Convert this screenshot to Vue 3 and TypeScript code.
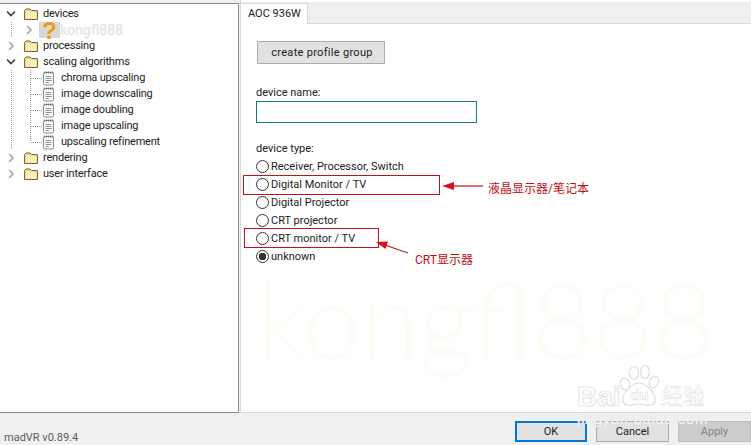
<script setup lang="ts">
type Kind = 'folder' | 'doc' | 'unknown'
interface Row {
  label: string
  kind: Kind
  level: 0 | 1
  ctl: 'open' | 'closed' | 'branch' | 'last'
}
const rows: Row[] = [
  { label: 'devices', kind: 'folder', level: 0, ctl: 'open' },
  { label: 'kongfl888', kind: 'unknown', level: 1, ctl: 'closed' },
  { label: 'processing', kind: 'folder', level: 0, ctl: 'closed' },
  { label: 'scaling algorithms', kind: 'folder', level: 0, ctl: 'open' },
  { label: 'chroma upscaling', kind: 'doc', level: 1, ctl: 'branch' },
  { label: 'image downscaling', kind: 'doc', level: 1, ctl: 'branch' },
  { label: 'image doubling', kind: 'doc', level: 1, ctl: 'branch' },
  { label: 'image upscaling', kind: 'doc', level: 1, ctl: 'branch' },
  { label: 'upscaling refinement', kind: 'doc', level: 1, ctl: 'last' },
  { label: 'rendering', kind: 'folder', level: 0, ctl: 'closed' },
  { label: 'user interface', kind: 'folder', level: 0, ctl: 'closed' },
]
const types = [
  { label: 'Receiver, Processor, Switch', on: false },
  { label: 'Digital Monitor / TV', on: false },
  { label: 'Digital Projector', on: false },
  { label: 'CRT projector', on: false },
  { label: 'CRT monitor / TV', on: false },
  { label: 'unknown', on: true },
]
</script>

<template>
  <div class="window">
    <div class="main">
      <div class="tree">
        <div v-for="r in rows" :key="r.label" class="row">
          <span v-if="r.level === 1" class="indent"></span>
          <span class="ctl" :class="r.ctl">
            <svg v-if="r.ctl === 'open'" width="12" height="8" viewBox="0 0 12 8">
              <path d="M2 1.5 6 5.5 10 1.5" fill="none" stroke="#3c3c3c" stroke-width="1.6" />
            </svg>
            <svg v-else-if="r.ctl === 'closed'" width="8" height="12" viewBox="0 0 8 12">
              <path d="M2 2 6 6 2 10" fill="none" stroke="#a6a6a6" stroke-width="1.6" />
            </svg>
          </span>
          <svg v-if="r.kind === 'folder'" class="ico" width="14" height="14" viewBox="0 0 14 14">
            <path d="M.5 12.5V3.5L2 2H6L7.5 3.5H13.5V12.5Z" fill="#f6dc85" stroke="#6f6a50" />
            <path d="M2 5H12V11.5H2Z" fill="#fdeeb4" />
          </svg>
          <svg v-else-if="r.kind === 'doc'" class="ico doc" width="13" height="15" viewBox="0 0 13 15">
            <rect x="1.5" y="1.5" width="10" height="12.5" rx="1.5" fill="#fff" stroke="#7f8a90" />
            <path d="M2 1.5H11" stroke="#77705c" stroke-width="2" stroke-dasharray="1 1" />
            <path d="M3.5 5.5H9.5M3.5 7.5H9.5M3.5 9.5H9.5M3.5 11.5H7" stroke="#8a949a" />
          </svg>
          <span v-else class="unk">?</span>
          <span class="label" :class="{ ghost: r.kind === 'unknown' }">{{ r.label }}</span>
        </div>
      </div>
      <div class="pane">
        <div class="tabs"><span class="tab">AOC 936W</span></div>
        <div class="page">
          <button class="create" type="button">create profile group</button>
          <div class="field-label name">device name:</div>
          <div class="input"></div>
          <div class="field-label kind">device type:</div>
          <div v-for="t in types" :key="t.label" class="radio-row">
            <span class="radio" :class="{ on: t.on }"></span>
            <span class="radio-text">{{ t.label }}</span>
          </div>
        </div>
      </div>
    </div>
    <div class="footer">
      <span class="version">madVR v0.89.4</span>
      <div class="actions">
        <button class="btn ok" type="button">OK</button>
        <button class="btn" type="button">Cancel</button>
        <button class="btn off" type="button">Apply</button>
      </div>
    </div>

    <div class="mark">kongfl888</div>

    <div class="redbox box1"></div>
    <div class="redbox box2"></div>
    <svg class="arrows" width="751" height="445" viewBox="0 0 751 445">
      <path d="M483 186H452" stroke="#c8101a" stroke-width="1.2" />
      <path d="M442 186 454 182V190Z" fill="#d8101a" />
      <path d="M408 253 385 245" stroke="#c8101a" stroke-width="1.2" />
      <path d="M376 242 388 241.5 385.5 249Z" fill="#d8101a" />
    </svg>
    <div class="note note1">液晶显示器/笔记本</div>
    <div class="note note2">CRT显示器</div>

    <svg class="paw" width="44" height="46" viewBox="0 0 44 46">
      <g fill="#fff" stroke="#dedede" stroke-width="1.2">
        <ellipse cx="7" cy="20" rx="4.5" ry="6" transform="rotate(-20 7 20)" />
        <ellipse cx="16" cy="9" rx="4.5" ry="6.5" />
        <ellipse cx="27" cy="8" rx="4.5" ry="6.5" />
        <ellipse cx="36" cy="18" rx="4.5" ry="6" transform="rotate(20 36 18)" />
        <path d="M21 19C28 19 39 30 37 37 35 44 27 40 21 40 15 40 7 44 5 37 3 30 14 19 21 19Z" />
      </g>
    </svg>
    <div class="bai">Bai</div>
    <div class="du">du</div>
    <div class="jy">经验</div>
    <div class="url">jingyan.baidu.com</div>
  </div>
</template>

<style>
html, body { margin: 0; background: #f0f0f0; overflow: hidden; }
</style>

<style scoped>
.window {
  position: relative;
  width: 751px;
  height: 445px;
  overflow: hidden;
  display: flex;
  flex-direction: column;
  background: #f0f0f0;
  color: #1c1c1c;
  font: 11px/16px Roboto, "Noto Sans CJK SC", sans-serif;
}
.main { flex: 0 0 413px; display: flex; }
.tree {
  box-sizing: border-box;
  width: 239px;
  margin-top: 3px;
  padding: 2px 0 0 2px;
  background: #fff;
  border-top: 1px solid #8c8c8c;
  border-right: 1px solid #8c8c8c;
  border-bottom: 1px solid #8c8c8c;
}
.row { display: flex; align-items: center; height: 16px; white-space: nowrap; }
.indent {
  align-self: stretch;
  flex: 0 0 18px;
  box-sizing: border-box;
  background: linear-gradient(#9a9a9a 50%, transparent 50%) 9px 0 / 1px 2px repeat-y;
}
.ctl {
  position: relative;
  align-self: stretch;
  flex: 0 0 18px;
  display: flex;
  align-items: center;
  justify-content: center;
  margin-right: 4px;
}
.ctl.branch {
  background: linear-gradient(#9a9a9a 50%, transparent 50%) 10px 0 / 1px 2px repeat-y;
}
.ctl.last::before {
  content: "";
  position: absolute;
  left: 10px;
  top: 0;
  height: 8px;
  background: linear-gradient(#9a9a9a 50%, transparent 50%) 0 0 / 1px 2px repeat-y;
  width: 1px;
}
.ctl.branch::after, .ctl.last::after {
  content: "";
  position: absolute;
  left: 11px;
  width: 11px;
  top: 8px;
  height: 1px;
  background: linear-gradient(90deg, #9a9a9a 50%, transparent 50%) 0 0 / 2px 1px repeat-x;
}
.ico { flex: none; margin-right: 5px; }
.ico.doc { margin-right: 6px; }
.unk {
  flex: none;
  width: 21px;
  height: 16px;
  margin-left: -3px;
  background: #d8d8d8;
  color: #f09a14;
  font: 700 24px/17px "Liberation Sans", sans-serif;
  text-align: center;
}
.label { letter-spacing: -.2px; }
.ghost { color: #e4e4e4; font-size: 14px; font-weight: 500; letter-spacing: 0; }
.pane {
  flex: 1;
  margin-left: 1px;
  display: flex;
  flex-direction: column;
  border-left: 1px solid #d9d9d9;
  box-sizing: border-box;
  background: #fff;
  border-bottom: 1px solid #d9d9d9;
}
.tabs {
  margin-top: 2px;
  padding-top: 1px;
  display: flex;
  background: #f0f0f0;
  border-bottom: 1px solid #d9d9d9;
  height: 20px;
}
.tab {
  width: 67px;
  box-sizing: border-box;
  height: 21px;
  padding-left: 7px;
  line-height: 20px;
  background: #fff;
  border-right: 1px solid #d9d9d9;
  border-top: 1px solid #d9d9d9;
}
.page { flex: 1; padding: 17px 0 0 15px; position: relative; }
.create {
  display: block;
  width: 128px;
  height: 23px;
  margin-left: 1px;
  padding: 0 0 0 2px;
  background: #e1e1e1;
  border: 1px solid #adadad;
  font: inherit;
  letter-spacing: .3px;
  color: #1c1c1c;
}
.field-label { height: 16px; line-height: 19px; }
.name { margin-top: 19px; }
.input {
  box-sizing: border-box;
  width: 221px;
  height: 22px;
  margin-top: 2px;
  background: #fff;
  border: 1px solid #1d7390;
}
.kind { margin-top: 17px; margin-bottom: 1px; line-height: 17px; }
.radio-row {
  display: flex;
  align-items: center;
  gap: 2px;
  height: 18px;
}
.radio {
  box-sizing: border-box;
  width: 13px;
  height: 13px;
  border: 1px solid #333;
  border-radius: 50%;
  background: #fff;
}
.radio.on { background: radial-gradient(circle, #333 0 3.5px, #fff 4px); }
.radio-text { padding-top: 2px; }
.footer {
  flex: 1;
  display: flex;
  align-items: flex-end;
  justify-content: space-between;
  padding: 0 0 3px 4px;
}
.version { color: #5c5c5c; line-height: 14px; margin-bottom: -3px; }
.actions { display: flex; gap: 9px; }
.btn {
  box-sizing: border-box;
  width: 73px;
  height: 21px;
  padding: 0;
  background: #e1e1e1;
  border: 1px solid #adadad;
  font: inherit;
  color: #1c1c1c;
}
.btn.ok { width: 72px; border: 2px solid #0078d7; }
.btn.off { background: #cccccc; border-color: #bfbfbf; color: #838383; }
.mark {
  position: absolute;
  left: 256px;
  top: 258px;
  font: 300 105px/120px Lato, sans-serif;
  color: #fdfdf6;
  white-space: nowrap;
  pointer-events: none;
}
.redbox { position: absolute; box-sizing: border-box; border: 1px solid #c8101a; }
.box1 { left: 243px; top: 175px; width: 197px; height: 20px; }
.box2 { left: 244px; top: 228px; width: 135px; height: 20px; }
.arrows { position: absolute; left: 0; top: 0; }
.note { position: absolute; color: #c00d14; font-size: 12px; line-height: 16px; white-space: nowrap; }
.note1 { left: 488px; top: 181px; }
.note2 { left: 415px; top: 252px; }
.paw { position: absolute; left: 618px; top: 364px; }
.bai, .du, .jy, .url {
  position: absolute;
  white-space: nowrap;
  color: #fff;
  font-family: "Liberation Sans", "Noto Sans CJK SC", sans-serif;
}
.bai {
  left: 577px;
  top: 382px;
  font-size: 28px;
  line-height: 30px;
  font-weight: 700;
  -webkit-text-stroke: .7px #d8d8d8;
}
.du { left: 630px; top: 386px; font-size: 15px; line-height: 18px; font-weight: 700; -webkit-text-stroke: .4px #d4d4d4; }
.jy { left: 661px; top: 385px; font-size: 22px; line-height: 24px; -webkit-text-stroke: .4px #d8d8d8; }
.url { left: 577px; top: 411px; font-size: 15px; line-height: 16px; letter-spacing: .6px; color: #f4f4f4; text-shadow: 0 0 1px #d8d8d8; }
</style>
